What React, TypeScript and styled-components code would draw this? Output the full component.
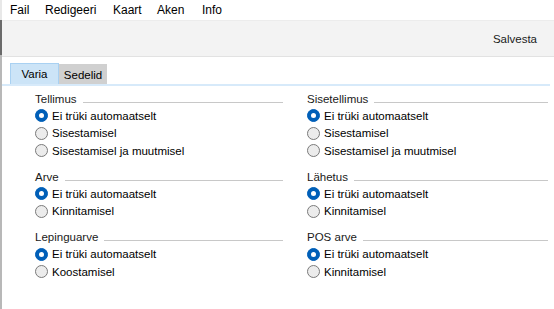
import styled, { createGlobalStyle } from "styled-components";

interface Group {
    title: string;
    options: string[];
}

const leftGroups: Group[] = [
    { title: "Tellimus", options: ["Ei trüki automaatselt", "Sisestamisel", "Sisestamisel ja muutmisel"] },
    { title: "Arve", options: ["Ei trüki automaatselt", "Kinnitamisel"] },
    { title: "Lepinguarve", options: ["Ei trüki automaatselt", "Koostamisel"] },
];

const rightGroups: Group[] = [
    { title: "Sisetellimus", options: ["Ei trüki automaatselt", "Sisestamisel", "Sisestamisel ja muutmisel"] },
    { title: "Lähetus", options: ["Ei trüki automaatselt", "Kinnitamisel"] },
    { title: "POS arve", options: ["Ei trüki automaatselt", "Kinnitamisel"] },
];

// menu label and the width of its slot
const menuItems: [string, number][] = [
    ["Fail", 35],
    ["Redigeeri", 68],
    ["Kaart", 44],
    ["Aken", 45],
    ["Info", 40],
];

const GlobalStyle = createGlobalStyle`
    html, body {
        margin: 0;
        padding: 0;
        background: #ffffff;
    }
    body {
        font-family: "Liberation Sans", Arial, sans-serif;
        font-size: 11.5px;
        color: #1a1a1a;
    }
`;

const Window = styled.div`
    display: flex;
    width: 554px;
    height: 309px;
    overflow: hidden;
    background: #ffffff;
`;

// left edge of the window behind
const Edge = styled.div`
    width: 2px;
    flex-shrink: 0;
    background: linear-gradient(to bottom, #e8e8e8 0, #e8e8e8 20px, #6a6a6a 20px, #6a6a6a 55px, #b8b8b8 55px);
`;

const Main = styled.div`
    flex: 1;
    display: flex;
    flex-direction: column;
`;

const MenuBar = styled.div`
    height: 20px;
    display: flex;
    align-items: center;
    padding-left: 8px;
    background: #ffffff;
`;

const MenuItem = styled.span<{ $w: number }>`
    width: ${p => p.$w}px;
    font-size: 12px;
    color: #000;
`;

const Toolbar = styled.div`
    height: 35px;
    display: flex;
    align-items: center;
    justify-content: flex-end;
    padding-right: 17px;
    background: #f3f3f3;
    border-top: 1px solid #ececec;
    border-bottom: 1px solid #e2e2e2;
`;

const ToolButton = styled.span`
    font-size: 11.5px;
    color: #1a1a1a;
`;

const TabStrip = styled.div`
    display: flex;
    align-items: flex-end;
    margin-top: 6px;
    padding-left: 8px;
    height: 21px;
`;

const Tab = styled.div<{ $active?: boolean; $w: number }>`
    box-sizing: border-box;
    width: ${p => p.$w}px;
    height: ${p => (p.$active ? "21px" : "20px")};
    display: flex;
    align-items: center;
    justify-content: center;
    font-size: 11.5px;
    color: #000;
    background: ${p => (p.$active ? "#cce4f7" : "#d0d0d0")};
    border: 1px solid ${p => (p.$active ? "#a9d1f2" : "#d0d0d0")};
    border-bottom: none;
`;

const Panel = styled.div`
    margin-right: 4px;
    border-top: 2px solid #d7eafa;
    padding: 4px 2px 0 33px;
    display: grid;
    grid-template-columns: 248px 1fr;
    column-gap: 24px;
`;

const Column = styled.div`
    display: flex;
    flex-direction: column;
    gap: 8.5px;
`;

const GroupBox = styled.div`
    display: flex;
    flex-direction: column;
`;

const GroupTitle = styled.div`
    height: 17px;
    display: flex;
    align-items: center;
    gap: 6px;
    font-size: 11.5px;
    color: #1a1a1a;
`;

const Rule = styled.div`
    flex: 1;
    height: 1px;
    margin-top: 7px;
    background: #c8c8c8;
`;

const OptionRow = styled.label`
    height: 17.5px;
    display: flex;
    align-items: center;
    gap: 4px;
    font-size: 11.5px;
    color: #000;
`;

const RadioDot = styled.span<{ $checked?: boolean }>`
    box-sizing: border-box;
    width: 13px;
    height: 13px;
    border-radius: 50%;
    flex-shrink: 0;
    display: flex;
    align-items: center;
    justify-content: center;
    background: ${p => (p.$checked ? "#005fb8" : "#ececec")};
    border: 1px solid ${p => (p.$checked ? "#005fb8" : "#7a7a7a")};

    &::after {
        content: "";
        display: ${p => (p.$checked ? "block" : "none")};
        width: 5px;
        height: 5px;
        border-radius: 50%;
        background: #ffffff;
    }
`;

function OptionGroup({ group }: { group: Group }) {
    return (
        <GroupBox>
            <GroupTitle>
                <span>{group.title}</span>
                <Rule />
            </GroupTitle>
            {group.options.map((o, i) => (
                <OptionRow key={o}>
                    <RadioDot $checked={i === 0} />
                    {o}
                </OptionRow>
            ))}
        </GroupBox>
    );
}

export default function App() {
    return (
        <Window>
            <GlobalStyle />
            <Edge />
            <Main>
                <MenuBar>
                    {menuItems.map(([m, w]) => (
                        <MenuItem key={m} $w={w}>{m}</MenuItem>
                    ))}
                </MenuBar>
                <Toolbar>
                    <ToolButton>Salvesta</ToolButton>
                </Toolbar>
                <TabStrip>
                    <Tab $active $w={49}>Varia</Tab>
                    <Tab $w={48}>Sedelid</Tab>
                </TabStrip>
                <Panel>
                    <Column>
                        {leftGroups.map(g => (
                            <OptionGroup key={g.title} group={g} />
                        ))}
                    </Column>
                    <Column>
                        {rightGroups.map(g => (
                            <OptionGroup key={g.title} group={g} />
                        ))}
                    </Column>
                </Panel>
            </Main>
        </Window>
    );
}
